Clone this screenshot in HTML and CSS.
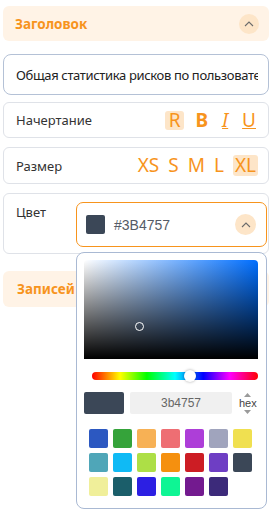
FILE: index.html
```html
<!DOCTYPE html>
<html lang="ru">
<head>
<meta charset="utf-8">
<link rel="stylesheet" href="styles.css">
</head>
<body>
<div class="panel">
  <div class="section-header">
    <span class="section-title">Заголовок</span>
    <span class="chev-btn"><svg width="10" height="6" viewBox="0 0 10 6"><path d="M1 5 L5 1 L9 5" fill="none" stroke="#6b6b6b" stroke-width="1.1"/></svg></span>
  </div>

  <div class="text-input"><span class="text-value">Общая статистика рисков по пользователям</span></div>

  <div class="row">
    <span class="label">Начертание</span>
    <div class="opts">
      <span class="opt opt-active">R</span>
      <span class="opt opt-bold">B</span>
      <span class="opt opt-italic">I</span>
      <span class="opt opt-under">U</span>
    </div>
  </div>

  <div class="row row-size">
    <span class="label">Размер</span>
    <div class="opts sizes">
      <span class="size">XS</span>
      <span class="size">S</span>
      <span class="size">M</span>
      <span class="size">L</span>
      <span class="size size-active">XL</span>
    </div>
  </div>

  <div class="row row-color">
    <span class="label label-top">Цвет</span>
    <div class="select-wrap">
      <div class="select">
        <span class="sel-swatch"></span>
        <span class="sel-value">#3B4757</span>
        <span class="chev-btn chev-sel"><svg width="10" height="6" viewBox="0 0 10 6"><path d="M1 5 L5 1 L9 5" fill="none" stroke="#6b6b6b" stroke-width="1.1"/></svg></span>
      </div>
      <div class="picker">
        <div class="sv">
          <span class="sv-marker"></span>
        </div>
        <div class="hue">
          <span class="hue-thumb"></span>
        </div>
        <div class="preview-row">
          <span class="preview"></span>
          <span class="hex-input">3b4757</span>
          <span class="hex-mode">
            <svg class="tri" width="7" height="4" viewBox="0 0 7 4"><path d="M0 4 L3.5 0 L7 4 Z" fill="#9a9a9a"/></svg>
            <span class="hex-label">hex</span>
            <svg class="tri" width="7" height="4" viewBox="0 0 7 4"><path d="M0 0 L3.5 4 L7 0 Z" fill="#9a9a9a"/></svg>
          </span>
        </div>
        <div class="swatches">
          <span class="sw c1"></span><span class="sw c2"></span><span class="sw c3"></span><span class="sw c4"></span><span class="sw c5"></span><span class="sw c6"></span><span class="sw c7"></span>
          <span class="sw c8"></span><span class="sw c9"></span><span class="sw c10"></span><span class="sw c11"></span><span class="sw c12"></span><span class="sw c13"></span><span class="sw c14"></span>
          <span class="sw c15"></span><span class="sw c16"></span><span class="sw c17"></span><span class="sw c18"></span><span class="sw c19"></span><span class="sw c20"></span>
        </div>
      </div>
    </div>
  </div>

  <div class="section-header section-header-2">
    <span class="section-title">Записей на странице</span>
  </div>
</div>
</body>
</html>
```

FILE: styles.css
```css
*, *::before, *::after {
  box-sizing: border-box;
}
html, body {
  margin: 0;
  padding: 0;
  background: #ffffff;
}
body {
  width: 270px;
  height: 516px;
  overflow: hidden;
  font-family: "Noto Sans", "Open Sans", sans-serif;
  color: #333;
}
.panel {
  padding: 6px 1px 0 3px;
  display: flex;
  flex-direction: column;
}
.section-header {
  height: 35px;
  background: #fff3e6;
  border-radius: 6px;
  display: flex;
  align-items: center;
  justify-content: space-between;
  padding: 0 10px 0 12px;
  flex-shrink: 0;
}
.section-title {
  color: #f7941d;
  font-weight: 700;
  font-size: 13.5px;
  white-space: nowrap;
}
.chev-btn {
  width: 20px;
  height: 20px;
  border-radius: 50%;
  background: #fde5c8;
  display: flex;
  align-items: center;
  justify-content: center;
  flex-shrink: 0;
}
.text-input {
  margin-top: 13px;
  height: 41px;
  border: 1px solid #b4c1d6;
  border-radius: 8px;
  display: flex;
  align-items: center;
  padding: 0 10px 0 12px;
  flex-shrink: 0;
}
.text-value {
  display: block;
  width: 100%;
  overflow: hidden;
  white-space: nowrap;
  font-size: 13px;
  letter-spacing: -0.35px;
  color: #222;
}
.row {
  margin-top: 7px;
  height: 36px;
  border: 1px solid #dfe2e8;
  border-radius: 6px;
  display: flex;
  align-items: center;
  justify-content: space-between;
  padding: 0 12px 0 12px;
  flex-shrink: 0;
}
.row + .row {
  margin-top: 9px;
}
.row-size {
  height: 37px;
}
.label {
  font-size: 13px;
  color: #333;
}
.opts {
  display: flex;
  align-items: center;
  gap: 11px;
}
.opt {
  color: #f7941d;
  font-size: 19px;
  line-height: 19px;
  height: 19px;
  min-width: 12px;
  text-align: center;
}
.opt-active {
  background: #fde5c8;
  border-radius: 3px;
  padding: 0 4px;
}
.opt-bold {
  font-weight: 700;
}
.opt-italic {
  font-style: italic;
  text-decoration: underline;
  text-decoration-thickness: 1px;
}
.opt-under {
  text-decoration: underline;
  text-decoration-thickness: 1px;
}
.sizes {
  gap: 9px;
  margin-right: -2px;
}
.size {
  color: #f7941d;
  font-size: 19px;
  line-height: 21px;
}
.size-active {
  background: #fde5c8;
  border-radius: 3px;
  padding: 0 2px;
}
.row-color {
  height: 61px;
  align-items: flex-start;
  padding: 8px 1px 0 12px;
}
.label-top {
  margin-top: 1px;
}
.select-wrap {
  position: relative;
  width: 191px;
}
.select {
  height: 45px;
  border: 1px solid #f7941d;
  border-radius: 7px;
  display: flex;
  align-items: center;
  padding: 0 10px 0 9px;
}
.sel-swatch {
  width: 19px;
  height: 19px;
  border-radius: 2px;
  background: #3b4757;
}
.sel-value {
  margin-left: 9px;
  flex: 1;
  font-family: "Liberation Sans", Arial, sans-serif;
  font-size: 14px;
  color: #555b66;
}
.chev-sel {
  width: 21px;
  height: 21px;
}
.picker {
  position: absolute;
  left: 0;
  top: 50px;
  width: 191px;
  height: 257px;
  background: #fff;
  border: 1px solid #a9b9d3;
  border-radius: 8px;
  padding: 7px 8px 7px 7px;
  z-index: 2;
  display: flex;
  flex-direction: column;
}
.sv {
  position: relative;
  height: 99px;
  flex-shrink: 0;
  border-radius: 4px 4px 0 0;
  background:
    linear-gradient(to top, #000, rgba(0,0,0,0)),
    linear-gradient(to right, #fff, hsl(214, 100%, 50%));
}
.sv-marker {
  position: absolute;
  left: 51px;
  top: 62px;
  width: 9px;
  height: 9px;
  border: 1.5px solid #fff;
  border-radius: 50%;
}
.hue {
  position: relative;
  margin: 13px 0 0 8px;
  height: 8px;
  flex-shrink: 0;
  border-radius: 4px;
  background: linear-gradient(to right, #ff0000 0%, #ffff00 17%, #00ff00 33%, #00ffff 50%, #0000ff 67%, #ff00ff 83%, #ff0000 100%);
}
.hue-thumb {
  position: absolute;
  left: 92px;
  top: -2px;
  width: 12px;
  height: 12px;
  border-radius: 50%;
  background: #fff;
  box-shadow: 0 0 3px rgba(0,0,0,0.35);
}
.preview-row {
  margin-top: 12px;
  display: flex;
  align-items: center;
  height: 22px;
  flex-shrink: 0;
}
.preview {
  width: 40px;
  height: 22px;
  border-radius: 2px;
  background: #3b4757;
}
.hex-input {
  margin-left: 6px;
  width: 102px;
  height: 22px;
  background: #f0f0f0;
  border-radius: 2px;
  display: flex;
  align-items: center;
  justify-content: center;
  font-family: "Liberation Sans", Arial, sans-serif;
  font-size: 12px;
  color: #666;
}
.hex-mode {
  margin-left: 7px;
  display: flex;
  flex-direction: column;
  align-items: center;
  gap: 1px;
}
.hex-label {
  font-family: "Liberation Sans", Arial, sans-serif;
  font-size: 11px;
  line-height: 11px;
  color: #444;
}
.swatches {
  margin: 15px 0 0 5px;
  display: grid;
  grid-template-columns: repeat(7, 19px);
  grid-auto-rows: 19px;
  gap: 5px;
}
.sw {
  border-radius: 2px;
}
.c1 { background: #2c58c1; }
.c2 { background: #35a33a; }
.c3 { background: #f7b155; }
.c4 { background: #ee6e73; }
.c5 { background: #ad3ed8; }
.c6 { background: #a0a4bd; }
.c7 { background: #f0e050; }
.c8 { background: #4fa6b8; }
.c9 { background: #0fbaf5; }
.c10 { background: #addf46; }
.c11 { background: #f5900f; }
.c12 { background: #cc1d24; }
.c13 { background: #6e3ec4; }
.c14 { background: #3b4757; }
.c15 { background: #f0ef9a; }
.c16 { background: #1b5e6a; }
.c17 { background: #2c1fe3; }
.c18 { background: #0ef594; }
.c19 { background: #731a8f; }
.c20 { background: #3c2a7a; }
.section-header-2 {
  margin-top: 17px;
  height: 36px;
  padding-left: 14px;
}
```
